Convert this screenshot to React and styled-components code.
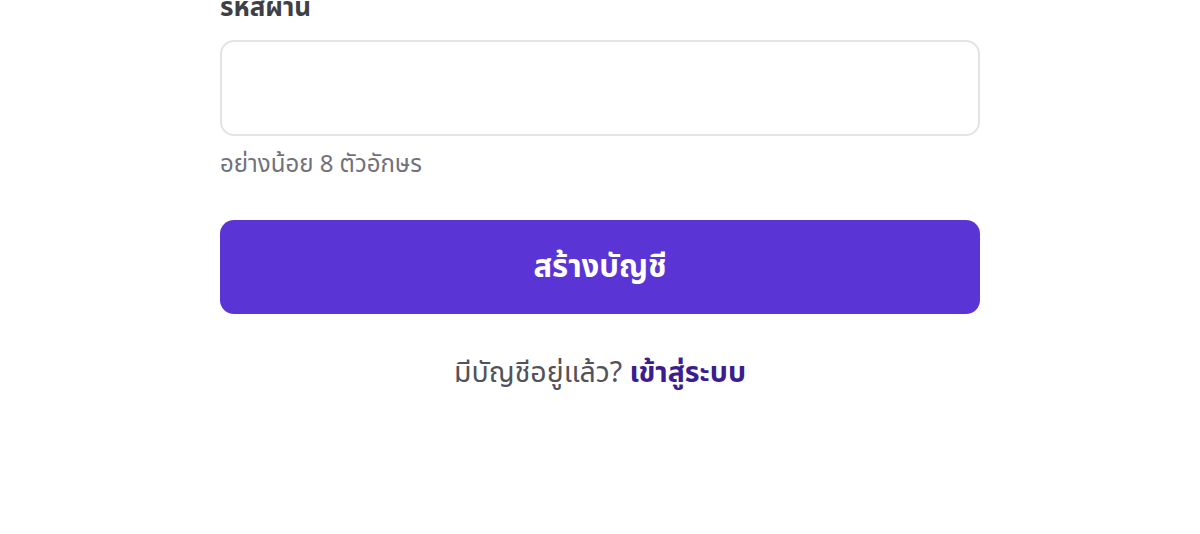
import React from "react";
import styled, { createGlobalStyle } from "styled-components";

const Global = createGlobalStyle`
  html, body { margin: 0; padding: 0; background: #ffffff; }
  body { font-family: "Noto Sans", "Noto Sans Thai", sans-serif; overflow: hidden; }
  * { box-sizing: border-box; }
`;

const Page = styled.div`
  width: 1200px;
  height: 534px;
  display: flex;
  justify-content: center;
  overflow: hidden;
`;

const Form = styled.form`
  width: 760px;
  margin-top: -12px;
  display: flex;
  flex-direction: column;
`;

const Field = styled.div`
  display: flex;
  flex-direction: column;
`;

const Label = styled.label`
  font-size: 26px;
  font-weight: 700;
  color: #3f3f46;
  line-height: 36px;
  margin-bottom: 16px;
`;

const Input = styled.input`
  height: 96px;
  border: 2px solid #e4e4e7;
  border-radius: 14px;
  padding: 0 20px;
  font-size: 24px;
  outline: none;
  background: #fff;
`;

const Hint = styled.div`
  margin-top: 10px;
  font-size: 24px;
  line-height: 34px;
  color: #71717a;
`;

const Submit = styled.button`
  margin-top: 40px;
  height: 94px;
  border: none;
  border-radius: 14px;
  background: #5b34d6;
  color: #ffffff;
  font-family: inherit;
  font-size: 31px;
  font-weight: 700;
  cursor: pointer;
`;

const Footer = styled.p`
  margin: 36px 0 0;
  text-align: center;
  font-size: 28.5px;
  line-height: 42px;
  color: #52525b;
`;

const Link = styled.a`
  color: #3b1d8f;
  font-weight: 700;
  text-decoration: none;
`;

export default function App() {
  return (
    <>
      <Global />
      <Page>
        <Form onSubmit={(e) => e.preventDefault()}>
          <Field>
            <Label htmlFor="pw">รหัสผ่าน</Label>
            <Input id="pw" type="password" />
            <Hint>อย่างน้อย 8 ตัวอักษร</Hint>
          </Field>
          <Submit type="submit">สร้างบัญชี</Submit>
          <Footer>
            มีบัญชีอยู่แล้ว? <Link href="#">เข้าสู่ระบบ</Link>
          </Footer>
        </Form>
      </Page>
    </>
  );
}
